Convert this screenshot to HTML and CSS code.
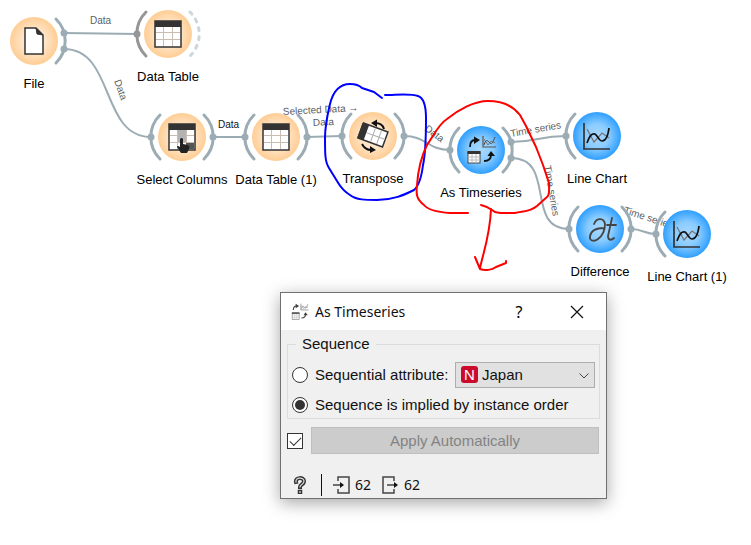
FILE: index.html
```
<!DOCTYPE html>
<html lang="en">
<head>
  <meta charset="UTF-8" />
  <meta name="viewport" content="width=device-width, initial-scale=1.0"/>
  <title>As Timeseries</title>
  <link rel="stylesheet" href="styles.css">
</head>
<body>

  <main class="workspace">
    <svg class="canvas" role="img" aria-label="Workflow">
      <defs>
        <radialGradient id="orange">
          <stop offset="0" stop-color="#fff1e0"/>
          <stop offset="0.5" stop-color="#ffe4c6"/>
          <stop offset="1" stop-color="#ffcd94"/>
        </radialGradient>
        <radialGradient id="blue">
          <stop offset="0" stop-color="#a8d8ff"/>
          <stop offset="0.5" stop-color="#8accff"/>
          <stop offset="1" stop-color="#2f9fff"/>
        </radialGradient>

        <path id="arcRight" d="M22 -22A31 31 0 0 1 22 22"/>
        <path id="arcLeft" d="M-22 -22A31 31 0 0 0 -22 22"/>

        <g id="table">
          <rect x="-13" y="-13" width="26" height="26" fill="#fff" stroke="#333" stroke-width="1.5"/>
          <path d="M-12 -1.500H12M-12 5.500H12M-4.500 -7V12M4.500 -7V12" stroke="#c9bdb2" fill="none"/>
          <rect x="-13" y="-13" width="26" height="6" fill="#333"/>
        </g>

        <g id="chart" fill="none">
          <path d="M-13 -13V13H13" stroke="#333" stroke-width="1.7"/>
          <path d="M-10 -7L-3 6L5 -3L12 2" stroke="#777" stroke-width="1.3"/>
          <path d="M-10 7C-7 -1 -5 -3 -2 -2C1 0 2 5 5 5C9 5 11 0 12 -8" stroke="#111" stroke-width="1.7"/>
        </g>

        <g id="timeseries">
          <path d="M-11 -3C-11 -8 -9 -10 -6 -10M3 11C8 11 10 9 10 5" fill="none" stroke="#111" stroke-width="1.8"/>
          <path d="M-7 -13.500L-1 -10L-7 -6ZM6.500 6L10 1L14 6Z" fill="#111"/>
          <path d="M2 -14V-3H15" fill="none" stroke="#555" stroke-width="1.2"/>
          <path d="M3 -11L7 -5L10 -9L14 -7" fill="none" stroke="#777"/>
          <path d="M3 -5C5 -12 7 -9 9 -7S12 -8 14 -13" fill="none" stroke="#444"/>
          <rect x="-13" y="2" width="12" height="11" fill="#fff" stroke="#444"/>
          <path d="M-13 7H-1M-13 10H-1M-9 4V13M-5 4V13" stroke="#bbb"/>
          <path d="M-13.500 2.500H-.500" stroke="#333" stroke-width="3"/>
        </g>
      </defs>

      <g class="links">
        <path d="M64 33L137 34"/>
        <path d="M64 49C115 49 100 137 151 137"/>
        <path d="M213 137H245"/>
        <path d="M307 137L342 136"/>
        <path d="M404 136C427 136 427 150 450 150"/>
        <path d="M511 142C538 142 538 136 566 136"/>
        <path d="M511 158C557 158 524 229 569 229"/>
        <path d="M631 229C643 229 644 234 656 234"/>
      </g>

      <g class="link-labels">
        <text x="90" y="24">Data</text>
        <text transform="translate(114 81) rotate(70)">Data</text>
        <text class="active" x="218" y="128">Data</text>
        <text transform="translate(283 115) rotate(-3)">Selected Data →</text>
        <text transform="translate(313 126) rotate(-3)">Data</text>
        <text transform="translate(424 130) rotate(36)">Data</text>
        <text transform="translate(511 137) rotate(-10)">Time series</text>
        <text transform="translate(544 166) rotate(80)">Time series</text>
        <text transform="translate(623 213) rotate(18)">Time series</text>
      </g>

      <g class="node" transform="translate(34 41)">
        <circle r="24" fill="url(#orange)"/>
        <use href="#arcRight" class="arc"/>
        <circle class="dot" cx="30" cy="-8" r="3.500"/>
        <circle class="dot" cx="30" cy="8" r="3.500"/>
        <path d="M-9 -13H2L9 -6V13H-9Z" fill="#fff" stroke="#333" stroke-width="1.5"/>
        <path d="M2 -13L9 -6L3 -7Z" fill="#333" stroke="#333"/>
        <text y="47">File</text>
      </g>

      <g class="node" transform="translate(168 34)">
        <circle r="24" fill="url(#orange)"/>
        <use href="#arcLeft" class="arc hover"/>
        <circle class="dot hover" cx="-31" r="3.500"/>
        <use href="#arcRight" class="arc empty"/>
        <use href="#table"/>
        <text y="47">Data Table</text>
      </g>

      <g class="node" transform="translate(182 137)">
        <circle r="24" fill="url(#orange)"/>
        <use href="#arcLeft" class="arc"/>
        <use href="#arcRight" class="arc"/>
        <circle class="dot" cx="-31" r="3.500"/>
        <circle class="dot" cx="31" r="3.500"/>
        <use href="#table"/>
        <path d="M-4 -7H4V5H-4Z" fill="#b3b3b3"/>
        <path d="M4 6H12V12H4Z" fill="#555"/>
        <path d="M-2 2Q0 0 1 2V7L6 8Q8 9 7 12L5 16H-1L-5 10Q-5 8 -2 10Z" fill="#222"/>
        <text y="47">Select Columns</text>
      </g>

      <g class="node" transform="translate(276 137)">
        <circle r="24" fill="url(#orange)"/>
        <use href="#arcLeft" class="arc"/>
        <use href="#arcRight" class="arc"/>
        <circle class="dot" cx="-31" r="3.500"/>
        <circle class="dot" cx="31" r="3.500"/>
        <use href="#table"/>
        <text y="47">Data Table (1)</text>
      </g>

      <g class="node" transform="translate(373 136)">
        <circle r="24" fill="url(#orange)"/>
        <use href="#arcLeft" class="arc"/>
        <use href="#arcRight" class="arc"/>
        <circle class="dot" cx="-31" r="3.500"/>
        <circle class="dot" cx="31" r="3.500"/>
        <path d="M11 -7C10 -11 7 -13 2 -13M-11 8C-9 12 -7 14 -2 14" fill="none" stroke="#111" stroke-width="2"/>
        <path d="M4 -16.500L-2 -13L4 -9ZM-3 10L3 14L-3 17Z" fill="#111"/>
        <g transform="translate(0 -1) rotate(20)">
          <rect x="-13" y="-8" width="26" height="16" fill="#fff" stroke="#333" stroke-width="1.5"/>
          <path d="M-7 0H13M0 -7V7M6.500 -7V7" stroke="#aaa"/>
          <rect x="-14" y="-8" width="7" height="16" fill="#333"/>
        </g>
        <text y="47">Transpose</text>
      </g>

      <g class="node" transform="translate(481 150)">
        <circle r="24" fill="url(#blue)"/>
        <use href="#arcLeft" class="arc"/>
        <use href="#arcRight" class="arc"/>
        <circle class="dot" cx="-31" r="3.500"/>
        <circle class="dot" cx="30" cy="-8" r="3.500"/>
        <circle class="dot" cx="30" cy="8" r="3.500"/>
        <use href="#timeseries"/>
        <text y="47">As Timeseries</text>
      </g>

      <g class="node" transform="translate(597 136)">
        <circle r="24" fill="url(#blue)"/>
        <use href="#arcLeft" class="arc"/>
        <circle class="dot" cx="-31" r="3.500"/>
        <use href="#chart"/>
        <text y="47">Line Chart</text>
      </g>

      <g class="node" transform="translate(600 229)">
        <circle r="24" fill="url(#blue)"/>
        <use href="#arcLeft" class="arc"/>
        <use href="#arcRight" class="arc"/>
        <circle class="dot" cx="-31" r="3.500"/>
        <circle class="dot" cx="31" r="3.500"/>
        <g fill="none" stroke="#444" stroke-width="1.8" stroke-linecap="round">
          <path d="M-6 -5C-3 -12 4 -11 5 -5C5 2 2 7 -2 10C-6 13 -11 12 -10 7C-9 2 -4 -1 4 -1"/>
          <path d="M12 -11L8 7C8 11 11 12 14 9M7 -4H16"/>
        </g>
        <text y="47">Difference</text>
      </g>

      <g class="node" transform="translate(687 234)">
        <circle r="24" fill="url(#blue)"/>
        <use href="#arcLeft" class="arc"/>
        <circle class="dot" cx="-31" r="3.500"/>
        <use href="#chart"/>
        <text y="47">Line Chart (1)</text>
      </g>

      <!-- hand drawn marks -->
      <g class="pen">
        <path class="pen-blue" d="M382 98L374 92L362 88C358 84 354 84 350 84C339 84 333 92 330 104C328 113 325 124 325 138C325 154 325 162 329 168L337 181C341 188 345 192 350 195C356 200 366 200 377 200C393 200 404 195 414 190C420 185 422 173 423 165C426 152 426 135 426 118C426 105 424 98 418 96C410 93 396 95 385 95"/>
        <path class="pen-red" d="M468 213H450C437 212 427 209 424 205C416 199 416 193 417 185C418 171 421 157 427 145C435 133 439 124 447 119C458 110 474 101 488 101C502 101 513 106 520 115L526 126L536 147L543 165L549 183C549 189 550 195 547 197L537 206C530 212 523 211 515 213C503 213 496 214 492 210C488 207 485 206 481 205"/>
        <path class="pen-red" d="M491 209C490 235 484 250 480 268M475 257L480 269C485 271 492 270 496 267L506 263V261"/>
      </g>
    </svg>

    <section class="dialog" role="dialog" aria-labelledby="dialogTitle">
      <header class="title-bar">
        <svg class="title-icon" viewBox="-15 -15 31 31" aria-hidden="true"><use href="#timeseries"/></svg>
        <h1 id="dialogTitle">As Timeseries</h1>
        <button class="title-button" type="button" aria-label="What's this">?</button>
        <button class="title-button" type="button" aria-label="Close">
          <svg width="14" height="14" viewBox="0 0 14 14"><path d="M1 1L13 13M13 1L1 13" stroke="#111" stroke-width="1.2"/></svg>
        </button>
      </header>

      <form class="dialog-body">
        <fieldset class="sequence">
          <legend>Sequence</legend>
          <div class="row">
            <input type="radio" name="sequence" id="attribute">
            <label for="attribute">Sequential attribute:</label>
            <div class="combo">
              <span class="badge" aria-hidden="true">N</span>
              <select aria-label="Sequential attribute">
                <option>Japan</option>
              </select>
              <svg class="chevron" viewBox="0 0 10 6" aria-hidden="true"><path d="M0.500 0.500L5 5L9.500 0.500" fill="none" stroke="#444"/></svg>
            </div>
          </div>
          <div class="row">
            <input type="radio" name="sequence" id="order" checked>
            <label for="order">Sequence is implied by instance order</label>
          </div>
        </fieldset>

        <div class="apply">
          <input type="checkbox" aria-label="Apply Automatically" checked>
          <button class="apply-button" type="button" disabled>Apply Automatically</button>
        </div>

        <footer class="status">
          <button class="help" type="button" aria-label="Help">
            <svg width="14" height="18" viewBox="0 0 14 18" fill="none" stroke-linecap="square">
              <path d="M3 6C2 1 11 1 11 5C11 9 7 8 7 11" stroke="#333" stroke-width="4"/>
              <path d="M3 6C2 1 11 1 11 5C11 9 7 8 7 11" stroke="#ddd" stroke-width="1.2"/>
              <rect x="5.500" y="14.500" width="3" height="3" stroke="#333" stroke-width="1.5"/>
            </svg>
          </button>
          <span class="divider"></span>
          <span class="count">
            <svg width="17" height="18" viewBox="0 0 17 18" fill="none" stroke="#444" stroke-width="1.5">
              <path d="M5 5V1H16V17H5V13M0 9H8"/><path d="M7 6L11 9L7 12Z" fill="#111" stroke="none"/>
            </svg>
            62
          </span>
          <span class="count">
            <svg width="17" height="18" viewBox="0 0 17 18" fill="none" stroke="#444" stroke-width="1.5">
              <path d="M12 5V1H1V17H12V13M5 9H13"/><path d="M12 6L16 9L12 12Z" fill="#111" stroke="none"/>
            </svg>
            62
          </span>
        </footer>
      </form>
    </section>
  </main>

</body>
</html>
```

FILE: styles.css
```
* {
  box-sizing: border-box;
}

body {
  margin: 0;
  background-color: #fff;
  color: #111;
  font-family: "Liberation Sans", Arial, sans-serif;
}

.workspace {
  position: relative;
  min-height: 100vh;
  overflow: hidden;
}

/* Workflow canvas */
.canvas {
  position: absolute;
  top: 0;
  left: 0;
  width: 100%;
  height: 100%;
  overflow: visible;
}

.links path {
  fill: none;
  stroke: #9cacb4;
  stroke-width: 2;
}

.link-labels text {
  font-size: 10px;
  fill: #5a5f66;
}

.link-labels .active {
  fill: #111;
}

.node text {
  font-size: 13px;
  text-anchor: middle;
  fill: #000;
}

.arc {
  fill: none;
  stroke: #9cacb4;
  stroke-width: 3;
  stroke-linecap: round;
}

.dot {
  fill: #9cacb4;
}

.arc.hover {
  stroke: #969696;
}

.dot.hover {
  fill: #969696;
}

.arc.empty {
  stroke: #cdd6da;
  stroke-dasharray: 3 6;
}

.pen path {
  fill: none;
  stroke-width: 2;
  stroke-linecap: round;
  stroke-linejoin: round;
}

.pen .pen-blue {
  stroke: #00f;
}

.pen .pen-red {
  stroke: #f00;
}

/* Dialog window */
.dialog {
  position: absolute;
  top: 292px;
  left: 280px;
  width: 327px;
  background: #f0f0f0;
  border: 1px solid #707070;
  box-shadow: 0 4px 16px rgba(0, 0, 0, 0.35);
  font-size: 15px;
  line-height: 20px;
}

.title-bar {
  display: flex;
  align-items: center;
  height: 37px;
  padding-left: 10px;
  background: #fff;
}

.title-icon {
  width: 18px;
  height: 18px;
  margin-right: 6px;
  opacity: 0.8;
}

.title-bar h1 {
  flex: 1;
  margin: 0;
  font-family: "Noto Sans", sans-serif;
  font-size: 14px;
  font-weight: 400;
}

.title-button {
  display: flex;
  align-items: center;
  justify-content: center;
  width: 58px;
  height: 36px;
  padding: 0;
  border: none;
  background: none;
  font-family: "Noto Sans", sans-serif;
  font-size: 16px;
}

.dialog-body {
  padding: 4px 6px 2px;
}

.sequence {
  display: grid;
  gap: 4px;
  margin: 0;
  padding: 8px 4px 0;
  border: 1px solid #dcdcdc;
}

.sequence legend {
  margin-left: 4px;
  padding: 0 6px;
}

.row {
  display: flex;
  align-items: center;
  height: 26px;
}

.row label {
  flex: 1;
  margin-left: 7px;
  white-space: nowrap;
}

input[type="radio"] {
  display: grid;
  place-items: center;
  appearance: none;
  width: 16px;
  height: 16px;
  margin: 0;
  border: 1px solid #333;
  border-radius: 50%;
  background: #fff;
}

input[type="radio"]:checked::before {
  content: "";
  width: 10px;
  height: 10px;
  border-radius: 50%;
  background: #333;
}

.combo {
  position: relative;
  width: 140px;
}

.combo select {
  display: block;
  appearance: none;
  width: 100%;
  height: 26px;
  padding: 0 20px 0 26px;
  border: 1px solid #adadad;
  border-radius: 0;
  background: #e1e1e1;
  color: #111;
  font: inherit;
}

.badge {
  position: absolute;
  top: 4px;
  left: 6px;
  width: 17px;
  height: 17px;
  border-radius: 3px;
  background: #cc0a2b;
  color: #fff;
  line-height: 17px;
  text-align: center;
}

.chevron {
  position: absolute;
  top: 11px;
  right: 6px;
  width: 10px;
  height: 6px;
}

.apply {
  display: flex;
  align-items: center;
  gap: 8px;
  margin-top: 8px;
  padding-right: 1px;
}

input[type="checkbox"] {
  display: grid;
  place-items: center;
  appearance: none;
  width: 16px;
  height: 16px;
  margin: 0;
  border: 1px solid #333;
  background: #fff;
}

input[type="checkbox"]:checked::before {
  content: "";
  width: 10px;
  height: 5px;
  border: solid #333;
  border-width: 0 0 1px 1px;
  transform: translateY(-1px) rotate(-45deg);
}

.apply-button {
  flex: 1;
  height: 27px;
  border: 1px solid #bfbfbf;
  background: #ccc;
  color: #838383;
  font: inherit;
}

.status {
  display: flex;
  align-items: center;
  height: 22px;
  margin-top: 20px;
  padding-left: 6px;
  font-family: "Noto Sans", sans-serif;
  font-size: 14px;
}

.help {
  display: flex;
  padding: 0;
  border: none;
  background: none;
}

.divider {
  width: 1px;
  height: 22px;
  margin: 0 11px 0 14px;
  background: #111;
}

.count {
  display: flex;
  align-items: center;
  gap: 5px;
  margin-right: 11px;
}
```
